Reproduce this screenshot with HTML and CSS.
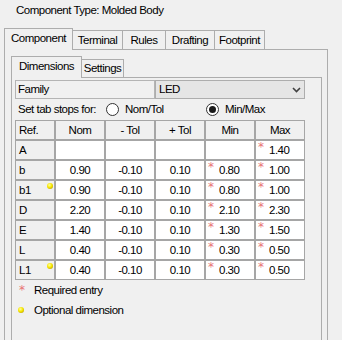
FILE: index.html
```html
<!DOCTYPE html>
<html lang="en">
<head>
    <meta charset="UTF-8">
    <title>Component Type</title>
    <link rel="stylesheet" href="styles.css">
</head>
<body>
    <div class="title">Component Type: Molded Body</div>

    <div class="tabs">
        <div class="tab active w-component">Component</div>
        <div class="tab w-terminal">Terminal</div>
        <div class="tab w-rules">Rules</div>
        <div class="tab w-drafting">Drafting</div>
        <div class="tab w-footprint">Footprint</div>
    </div>

    <div class="panel">
        <div class="tabs subtabs">
            <div class="tab active w-dimensions">Dimensions</div>
            <div class="tab w-settings">Settings</div>
        </div>

        <div class="page">
            <div class="family">
                <div class="family-label">Family</div>
                <div class="select">
                    <span>LED</span>
                    <svg class="chevron" width="9" height="6" viewBox="0 0 9 6">
                        <polyline points="1,1 4.5,4.5 8,1" fill="none" stroke="#404040" stroke-width="1.6"/>
                    </svg>
                </div>
            </div>

            <div class="stops">
                <span class="stops-label">Set tab stops for:</span>
                <span class="radio-opt"><span class="radio"></span>Nom/Tol</span>
                <span class="radio-opt"><span class="radio on"></span>Min/Max</span>
            </div>

            <div class="grid">
                <div class="hd ref-hd">Ref.</div>
                <div class="hd">Nom</div>
                <div class="hd">- Tol</div>
                <div class="hd">+ Tol</div>
                <div class="hd">Min</div>
                <div class="hd">Max</div>

                <div class="ref">A</div>
                <div class="val"></div>
                <div class="val"></div>
                <div class="val"></div>
                <div class="val"></div>
                <div class="req"><span class="star">*</span>1.40</div>

                <div class="ref">b</div>
                <div class="val">0.90</div>
                <div class="val">-0.10</div>
                <div class="val">0.10</div>
                <div class="req"><span class="star">*</span>0.80</div>
                <div class="req"><span class="star">*</span>1.00</div>

                <div class="ref">b1<span class="dot"></span></div>
                <div class="val">0.90</div>
                <div class="val">-0.10</div>
                <div class="val">0.10</div>
                <div class="req"><span class="star">*</span>0.80</div>
                <div class="req"><span class="star">*</span>1.00</div>

                <div class="ref">D</div>
                <div class="val">2.20</div>
                <div class="val">-0.10</div>
                <div class="val">0.10</div>
                <div class="req"><span class="star">*</span>2.10</div>
                <div class="req"><span class="star">*</span>2.30</div>

                <div class="ref">E</div>
                <div class="val">1.40</div>
                <div class="val">-0.10</div>
                <div class="val">0.10</div>
                <div class="req"><span class="star">*</span>1.30</div>
                <div class="req"><span class="star">*</span>1.50</div>

                <div class="ref">L</div>
                <div class="val">0.40</div>
                <div class="val">-0.10</div>
                <div class="val">0.10</div>
                <div class="req"><span class="star">*</span>0.30</div>
                <div class="req"><span class="star">*</span>0.50</div>

                <div class="ref">L1<span class="dot"></span></div>
                <div class="val">0.40</div>
                <div class="val">-0.10</div>
                <div class="val">0.10</div>
                <div class="req"><span class="star">*</span>0.30</div>
                <div class="req"><span class="star">*</span>0.50</div>
            </div>

            <div class="legend">
                <div class="legend-row">
                    <span class="legend-icon star-icon"><span class="star">*</span></span>
                    Required entry
                </div>
                <div class="legend-row">
                    <span class="legend-icon dot-icon"><span class="dot-inline"></span></span>
                    Optional dimension
                </div>
            </div>
        </div>
    </div>
</body>
</html>
```

FILE: styles.css
```css
/* base */
html, body {
    margin: 0;
    overflow: hidden;
    background: #f0f0f0;
}
body {
    font-family: "Liberation Sans", Arial, sans-serif;
    font-size: 11.5px;
    letter-spacing: -0.5px;
    line-height: 15px;
    color: #000;
}

.title {
    padding: 3px 0 0 16px;
    height: 15px;
    margin-bottom: 10px;
}

/* tabs */
.tabs {
    display: flex;
    align-items: flex-end;
    height: 21px;
    margin-left: 4px;
}
.tab {
    box-sizing: border-box;
    height: 19px;
    border: 1px solid #adadad;
    border-bottom: none;
    margin-left: -1px;
    padding-top: 2px;
    text-align: center;
    background: #f0f0f0;
}
.tab:first-child {
    margin-left: 0;
}
.tab.active {
    height: 22px;
    margin-bottom: -1px;
    position: relative;
    z-index: 1;
}
.w-component { width: 69px; }
.w-terminal { width: 51px; }
.w-rules { width: 44px; }
.w-drafting { width: 50px; }
.w-footprint { width: 51px; }

.subtabs {
    margin-left: 0;
}
.subtabs .tab {
    height: 18px;
    padding-top: 1px;
}
.subtabs .tab.active {
    height: 22px;
    padding-top: 2px;
}
.w-dimensions { width: 71px; }
.w-settings { width: 43px; }

.panel {
    box-sizing: border-box;
    width: 324px;
    height: 320px;
    margin-left: 4px;
    border: 1px solid #adadad;
    padding: 6px 5px 0 6px;
}
.page {
    box-sizing: border-box;
    width: 311px;
    height: 300px;
    border: 1px solid #adadad;
    padding: 2px 0 0 3px;
}

/* family row */
.family {
    display: flex;
    height: 19px;
}
.family-label {
    box-sizing: border-box;
    width: 140px;
    border: 1px solid #b4b4b4;
    padding-left: 2px;
    line-height: 17px;
}
.select {
    box-sizing: border-box;
    width: 150px;
    display: flex;
    align-items: center;
    border: 1px solid #adadad;
    background: #e5e5e5;
    padding-left: 3px;
}
.chevron {
    margin-left: auto;
    margin-right: 3px;
}

/* tab stops */
.stops {
    display: flex;
    align-items: center;
    height: 21px;
}
.stops-label {
    box-sizing: border-box;
    width: 91px;
    padding-left: 3px;
}
.radio-opt {
    display: flex;
    align-items: center;
    gap: 6px;
    width: 100px;
}
.radio {
    box-sizing: border-box;
    width: 13px;
    height: 13px;
    border: 1px solid #333;
    border-radius: 50%;
    background: #fff;
}
.radio.on {
    display: flex;
    align-items: center;
    justify-content: center;
}
.radio.on::after {
    content: "";
    width: 7px;
    height: 7px;
    border-radius: 50%;
    background: #1a1a1a;
}

/* grid */
.grid {
    display: grid;
    grid-template-columns: 38px repeat(5, 48px);
    grid-auto-rows: 18px;
    gap: 2px;
    padding: 1px;
    width: 288px;
    background: #a6a6a6;
    line-height: 18px;
}
.hd {
    background: #f0f0f0;
    text-align: center;
}
.ref-hd {
    text-align: left;
    padding-left: 3px;
}
.ref {
    position: relative;
    background: #f0f0f0;
    padding-left: 3px;
}
.val {
    background: #fff;
    text-align: center;
}
.req {
    display: flex;
    background: #fff;
    padding-left: 2px;
}
.star {
    width: 11px;
    flex-shrink: 0;
    font-family: "DejaVu Sans", sans-serif;
    font-size: 12px;
    line-height: 12px;
    letter-spacing: 0;
    color: #e87272;
}
.dot, .dot-inline {
    width: 6px;
    height: 6px;
    border-radius: 50%;
    background: radial-gradient(circle at 40% 35%, #ffffa0 0, #f6e600 45%, #d4bc00 70%, #6e6000 100%);
}
.dot {
    position: absolute;
    top: 2px;
    right: 1px;
}

/* legend */
.legend-row {
    display: flex;
    align-items: center;
    height: 20px;
}
.legend-icon {
    box-sizing: border-box;
    width: 19px;
    display: flex;
    align-items: center;
}
.star-icon {
    padding-left: 4px;
}
.star-icon .star {
    line-height: 8px;
    height: 8px;
}
.dot-icon {
    padding-left: 3px;
}
```
